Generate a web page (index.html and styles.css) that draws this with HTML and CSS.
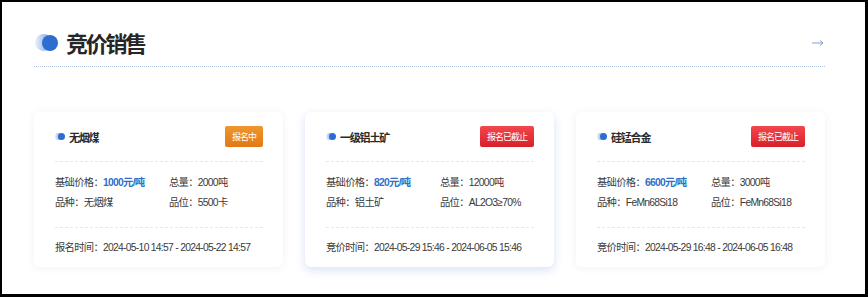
FILE: index.html
```html
<!DOCTYPE html>
<html lang="zh-CN">
<head>
<meta charset="utf-8">
<title>竞价销售</title>
<link rel="stylesheet" href="styles.css">
</head>
<body>
<div class="frame">
  <div class="section-head">
    <div class="section-title">
      <span class="title-icon"><i class="dot-a"></i><i class="dot-b"></i></span>
      <h2>竞价销售</h2>
    </div>
    <a class="more" href="#" aria-label="更多">
      <svg width="12" height="8" viewBox="0 0 12 8"><path d="M0 4H11M8 1.5L11 4L8 6.5" fill="none" stroke="#8b9dd0" stroke-width="1"/></svg>
    </a>
  </div>

  <div class="cards">
    <div class="card">
      <div class="card-head">
        <div class="card-title"><span class="mini-icon"><i></i><i></i></span>无烟煤</div>
        <span class="badge badge-orange">报名中</span>
      </div>
      <div class="meta">
        <div>基础价格：<b class="price">1000元/吨</b></div>
        <div>总量：2000吨</div>
        <div>品种：无烟煤</div>
        <div>品位：5500卡</div>
      </div>
      <div class="time">报名时间：2024-05-10 14:57 - 2024-05-22 14:57</div>
    </div>

    <div class="card card-active">
      <div class="card-head">
        <div class="card-title"><span class="mini-icon"><i></i><i></i></span>一级铝土矿</div>
        <span class="badge badge-red">报名已截止</span>
      </div>
      <div class="meta">
        <div>基础价格：<b class="price">820元/吨</b></div>
        <div>总量：12000吨</div>
        <div>品种：铝土矿</div>
        <div>品位：AL2O3≥70%</div>
      </div>
      <div class="time">竞价时间：2024-05-29 15:46 - 2024-06-05 15:46</div>
    </div>

    <div class="card">
      <div class="card-head">
        <div class="card-title"><span class="mini-icon"><i></i><i></i></span>硅锰合金</div>
        <span class="badge badge-red">报名已截止</span>
      </div>
      <div class="meta">
        <div>基础价格：<b class="price">6600元/吨</b></div>
        <div>总量：3000吨</div>
        <div>品种：FeMn68Si18</div>
        <div>品位：FeMn68Si18</div>
      </div>
      <div class="time">竞价时间：2024-05-29 16:48 - 2024-06-05 16:48</div>
    </div>
  </div>
</div>
</body>
</html>
```

FILE: styles.css
```css
* { box-sizing: border-box; }
html, body { margin: 0; padding: 0; background: #fff; }
body {
  font-family: "Liberation Sans", "Noto Sans CJK SC", Arial, sans-serif;
  color: #333;
}
.frame {
  width: 868px;
  height: 297px;
  border: 2px solid #000;
  border-right-width: 3px;
  border-bottom-width: 3px;
  padding: 0 40px 0 32px;
  background: #fff;
}
.section-head {
  display: flex;
  align-items: center;
  justify-content: space-between;
  padding-top: 26px;
  padding-bottom: 9px;
  border-bottom: 1px dotted #b3c6e6;
}
.section-title {
  display: flex;
  align-items: center;
  height: 29px;
}
.title-icon {
  position: relative;
  display: inline-block;
  width: 23px;
  height: 17px;
  margin-left: 1px;
  margin-right: 8px;
}
.title-icon .dot-a, .title-icon .dot-b {
  position: absolute;
  top: 0;
  width: 17px;
  height: 17px;
  border-radius: 50%;
}
.title-icon .dot-a {
  left: 0;
  background: linear-gradient(90deg, rgba(140,175,235,0.15), rgba(80,130,220,0.85));
}
.title-icon .dot-b {
  left: 7px;
  width: 16px;
  height: 16px;
  top: 0.5px;
  background: #2e6dd0;
}
.section-title h2 {
  margin: 0;
  font-size: 22px;
  line-height: 29px;
  font-weight: 700;
  letter-spacing: -2.3px;
  color: #262626;
  font-family: "Noto Sans CJK SC", sans-serif;
}
.more {
  display: flex;
  align-items: center;
  margin-right: 1px;
  margin-top: 1px;
}
.cards {
  display: grid;
  grid-template-columns: repeat(3, 1fr);
  gap: 22px;
  margin-top: 45px;
}
.card {
  height: 155px;
  background: #fff;
  border-radius: 6px;
  padding: 14px 20px 0 21px;
  box-shadow: 0 1px 8px rgba(40, 60, 110, 0.07);
  font-size: 10.3px;
  letter-spacing: -0.7px;
}
.card-active {
  box-shadow: 0 3px 10px rgba(50, 100, 200, 0.2);
}
.card-head {
  display: flex;
  align-items: center;
  justify-content: space-between;
  height: 21px;
  margin-bottom: 14px;
}
.card-title {
  display: flex;
  align-items: center;
  font-size: 11px;
  font-weight: 700;
  letter-spacing: -1.2px;
  color: #2a2a2a;
}
.mini-icon {
  position: relative;
  display: inline-block;
  width: 10px;
  height: 7px;
  margin-right: 4px;
}
.mini-icon i {
  position: absolute;
  top: 0;
  width: 7px;
  height: 7px;
  border-radius: 50%;
}
.mini-icon i:first-child {
  left: 0;
  background: linear-gradient(90deg, rgba(130,165,230,0.2), rgba(80,130,220,0.8));
}
.mini-icon i:last-child {
  left: 3px;
  background: #2e6dd0;
}
.badge {
  display: inline-flex;
  align-items: center;
  height: 21px;
  padding: 0 7px;
  border-radius: 2px;
  color: #fff;
  font-size: 9px;
  letter-spacing: -1px;
}
.badge-orange {
  background: linear-gradient(180deg, #f0962c, #e27816);
}
.badge-red {
  background: linear-gradient(180deg, #f2474c, #d9202a);
}
.meta {
  display: grid;
  grid-template-columns: 114px 1fr;
  border-top: 1px dashed #e4e7ec;
  border-bottom: 1px dashed #e4e7ec;
  padding: 11px 0 14px;
  line-height: 20px;
  color: #3a3a3a;
}
.price {
  color: #2f6fc8;
  font-weight: 700;
}
.time {
  line-height: 20px;
  padding-top: 10px;
  color: #3a3a3a;
  white-space: nowrap;
}
```
